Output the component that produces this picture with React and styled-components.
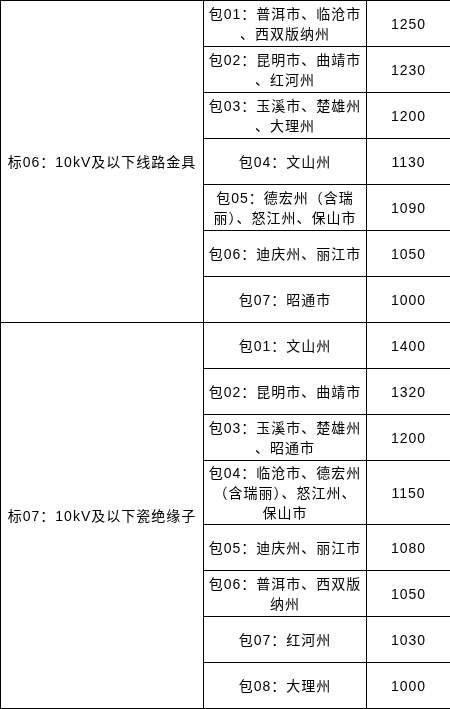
import React from "react";
import styled, { createGlobalStyle } from "styled-components";

const Global = createGlobalStyle`
  html, body { margin: 0; padding: 0; background: #fff; }
  body { font-family: "Liberation Sans", "Noto Sans CJK SC", sans-serif; color: #000; }
`;

const Table = styled.table`
  border-collapse: collapse;
  table-layout: fixed;
  width: 450px;
  font-size: 14px;
  letter-spacing: 1px;
  color: #000;
  will-change: transform;
`;

const Col = styled.col`
  width: ${(p) => p.$w}px;
`;

const Row = styled.tr`
  height: ${(p) => (p.$tall ? 64 : 46)}px;
`;

const Cell = styled.td`
  border: 1px solid #000;
  padding: 0;
  text-align: center;
  vertical-align: middle;
  white-space: nowrap;
  line-height: 20px;
  overflow: hidden;
`;

const groups = [
  {
    title: "标06：10kV及以下线路金具",
    rows: [
      { lines: ["包01：普洱市、临沧市", "、西双版纳州"], price: 1250 },
      { lines: ["包02：昆明市、曲靖市", "、红河州"], price: 1230 },
      { lines: ["包03：玉溪市、楚雄州", "、大理州"], price: 1200 },
      { lines: ["包04：文山州"], price: 1130 },
      { lines: ["包05：德宏州（含瑞", "丽）、怒江州、保山市"], price: 1090 },
      { lines: ["包06：迪庆州、丽江市"], price: 1050 },
      { lines: ["包07：昭通市"], price: 1000 },
    ],
  },
  {
    title: "标07：10kV及以下瓷绝缘子",
    rows: [
      { lines: ["包01：文山州"], price: 1400 },
      { lines: ["包02：昆明市、曲靖市"], price: 1320 },
      { lines: ["包03：玉溪市、楚雄州", "、昭通市"], price: 1200 },
      {
        lines: ["包04：临沧市、德宏州", "（含瑞丽）、怒江州、", "保山市"],
        price: 1150,
        tall: true,
      },
      { lines: ["包05：迪庆州、丽江市"], price: 1080 },
      { lines: ["包06：普洱市、西双版", "纳州"], price: 1050 },
      { lines: ["包07：红河州"], price: 1030 },
      { lines: ["包08：大理州"], price: 1000 },
    ],
  },
];

export default function App() {
  return (
    <>
      <Global />
      <Table>
        <colgroup>
          <Col $w={203} />
          <Col $w={163} />
          <Col $w={84} />
        </colgroup>
        <tbody>
          {groups.map((g) =>
            g.rows.map((r, i) => (
              <Row key={g.title + i} $tall={r.tall}>
                {i === 0 && <Cell rowSpan={g.rows.length}>{g.title}</Cell>}
                <Cell>
                  {r.lines.map((l, j) => (
                    <React.Fragment key={j}>
                      {j > 0 && <br />}
                      {l}
                    </React.Fragment>
                  ))}
                </Cell>
                <Cell>{r.price}</Cell>
              </Row>
            ))
          )}
        </tbody>
      </Table>
    </>
  );
}
